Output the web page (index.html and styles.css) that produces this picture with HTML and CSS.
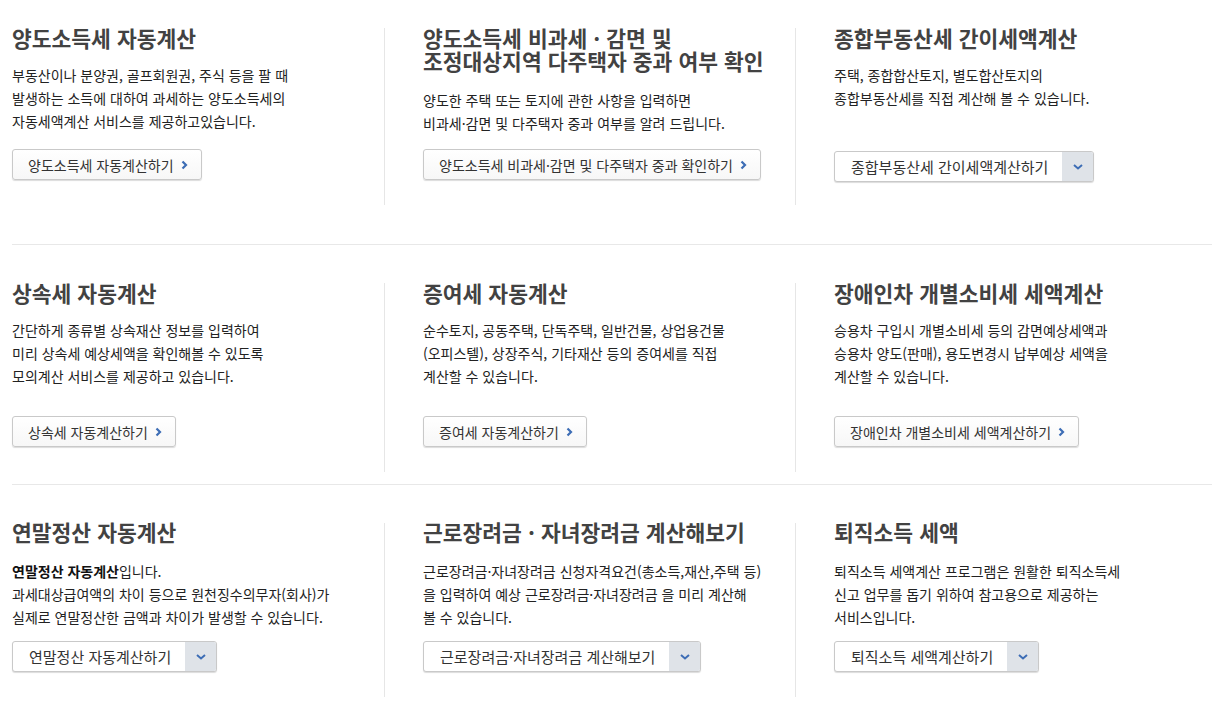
FILE: index.html
```html
<!DOCTYPE html>
<html lang="ko">
<head>
<meta charset="utf-8">
<title>세금 계산</title>
<link rel="stylesheet" href="styles.css">
</head>
<body>
<div class="board">
  <div class="row row1">
    <div class="cell">
      <h3 class="title">양도소득세 자동계산</h3>
      <p class="desc">부동산이나 분양권, 골프회원권, 주식 등을 팔 때<br>발생하는 소득에 대하여 과세하는 양도소득세의<br>자동세액계산 서비스를 제공하고있습니다.</p>
      <a class="btn" href="#"><span>양도소득세 자동계산하기</span><svg class="chev" width="7" height="10" viewBox="0 0 7 10"><polyline points="1.5,1.5 5,5 1.5,8.5" fill="none" stroke="#3d6db5" stroke-width="2.2"/></svg></a>
    </div>
    <div class="cell">
      <h3 class="title">양도소득세 비과세 · 감면 및<br>조정대상지역 다주택자 중과 여부 확인</h3>
      <p class="desc desc2">양도한 주택 또는 토지에 관한 사항을 입력하면<br>비과세·감면 및 다주택자 중과 여부를 알려 드립니다.</p>
      <a class="btn" href="#"><span>양도소득세 비과세·감면 및 다주택자 중과 확인하기</span><svg class="chev" width="7" height="10" viewBox="0 0 7 10"><polyline points="1.5,1.5 5,5 1.5,8.5" fill="none" stroke="#3d6db5" stroke-width="2.2"/></svg></a>
    </div>
    <div class="cell">
      <h3 class="title">종합부동산세 간이세액계산</h3>
      <p class="desc">주택, 종합합산토지, 별도합산토지의<br>종합부동산세를 직접 계산해 볼 수 있습니다.</p>
      <div class="select select-low"><span class="sel-text">종합부동산세 간이세액계산하기</span><span class="sel-arrow"><svg width="10" height="6" viewBox="0 0 10 6"><polyline points="1,1 5,4.5 9,1" fill="none" stroke="#3d6db5" stroke-width="2"/></svg></span></div>
    </div>
  </div>
  <hr class="divider d1">
  <div class="row row2">
    <div class="cell">
      <h3 class="title">상속세 자동계산</h3>
      <p class="desc">간단하게 종류별 상속재산 정보를 입력하여<br>미리 상속세 예상세액을 확인해볼 수 있도록<br>모의계산 서비스를 제공하고 있습니다.</p>
      <a class="btn" href="#"><span>상속세 자동계산하기</span><svg class="chev" width="7" height="10" viewBox="0 0 7 10"><polyline points="1.5,1.5 5,5 1.5,8.5" fill="none" stroke="#3d6db5" stroke-width="2.2"/></svg></a>
    </div>
    <div class="cell">
      <h3 class="title">증여세 자동계산</h3>
      <p class="desc">순수토지, 공동주택, 단독주택, 일반건물, 상업용건물<br>(오피스텔), 상장주식, 기타재산 등의 증여세를 직접<br>계산할 수 있습니다.</p>
      <a class="btn" href="#"><span>증여세 자동계산하기</span><svg class="chev" width="7" height="10" viewBox="0 0 7 10"><polyline points="1.5,1.5 5,5 1.5,8.5" fill="none" stroke="#3d6db5" stroke-width="2.2"/></svg></a>
    </div>
    <div class="cell">
      <h3 class="title">장애인차 개별소비세 세액계산</h3>
      <p class="desc">승용차 구입시 개별소비세 등의 감면예상세액과<br>승용차 양도(판매), 용도변경시 납부예상 세액을<br>계산할 수 있습니다.</p>
      <a class="btn" href="#"><span>장애인차 개별소비세 세액계산하기</span><svg class="chev" width="7" height="10" viewBox="0 0 7 10"><polyline points="1.5,1.5 5,5 1.5,8.5" fill="none" stroke="#3d6db5" stroke-width="2.2"/></svg></a>
    </div>
  </div>
  <hr class="divider d2">
  <div class="row row3">
    <div class="cell">
      <h3 class="title">연말정산 자동계산</h3>
      <p class="desc"><strong>연말정산 자동계산</strong>입니다.<br>과세대상급여액의 차이 등으로 원천징수의무자(회사)가<br>실제로 연말정산한 금액과 차이가 발생할 수 있습니다.</p>
      <div class="select"><span class="sel-text">연말정산 자동계산하기</span><span class="sel-arrow"><svg width="10" height="6" viewBox="0 0 10 6"><polyline points="1,1 5,4.5 9,1" fill="none" stroke="#3d6db5" stroke-width="2"/></svg></span></div>
    </div>
    <div class="cell">
      <h3 class="title">근로장려금 · 자녀장려금 계산해보기</h3>
      <p class="desc">근로장려금·자녀장려금 신청자격요건(총소득,재산,주택 등)<br>을 입력하여 예상 근로장려금·자녀장려금 을 미리 계산해<br>볼 수 있습니다.</p>
      <div class="select"><span class="sel-text">근로장려금·자녀장려금 계산해보기</span><span class="sel-arrow"><svg width="10" height="6" viewBox="0 0 10 6"><polyline points="1,1 5,4.5 9,1" fill="none" stroke="#3d6db5" stroke-width="2"/></svg></span></div>
    </div>
    <div class="cell">
      <h3 class="title">퇴직소득 세액</h3>
      <p class="desc">퇴직소득 세액계산 프로그램은 원활한 퇴직소득세<br>신고 업무를 돕기 위하여 참고용으로 제공하는<br>서비스입니다.</p>
      <div class="select"><span class="sel-text">퇴직소득 세액계산하기</span><span class="sel-arrow"><svg width="10" height="6" viewBox="0 0 10 6"><polyline points="1,1 5,4.5 9,1" fill="none" stroke="#3d6db5" stroke-width="2"/></svg></span></div>
    </div>
  </div>
</div>
</body>
</html>
```
FILE: styles.css
```css
* { box-sizing: border-box; }
html, body { margin: 0; padding: 0; background: #fff; }
body {
  font-family: "Noto Sans CJK KR", "Noto Sans", sans-serif;
  color: #222;
}
.board {
  width: 1200px;
  margin-left: 12px;
  padding-top: 28px;
}
.row {
  display: grid;
  grid-template-columns: 373px 411px 1fr;
}
.row1 { height: 177px; }
.row2 { height: 189px; }
.row3 { height: 174px; }
.cell {
  display: flex;
  flex-direction: column;
  align-items: flex-start;
  border-right: 1px solid #e6e6e6;
  padding-bottom: 25px;
  height: 100%;
}
.cell + .cell { padding-left: 38px; }
.cell:last-child { border-right: 0; }
.title {
  margin: -2px 0 15px;
  font-size: 21.5px;
  line-height: 23px;
  font-weight: 700;
  color: #424242;
  white-space: nowrap;
}
.row3 .title { margin-top: -3px; margin-bottom: 17px; }
.desc {
  margin: 0;
  font-size: 14px;
  line-height: 23px;
  color: #222;
  white-space: nowrap;
}
.desc2 { margin-top: 2px; }
.desc strong { font-weight: 700; color: #111; }
.btn {
  margin-top: auto;
  display: inline-flex;
  align-items: center;
  height: 31px;
  padding: 0 13px 0 15px;
  border: 1px solid #c9c9c9;
  border-radius: 3px;
  background: linear-gradient(#ffffff, #f7f7f7);
  box-shadow: 0 1px 1px rgba(0,0,0,0.14);
  font-size: 14px;
  color: #333;
  text-decoration: none;
  white-space: nowrap;
}
.chev { margin-left: 7px; display: block; }
.select {
  margin-top: auto;
  display: inline-flex;
  align-items: stretch;
  height: 31px;
  border: 1px solid #c9c9c9;
  border-radius: 3px;
  background: #fff;
  box-shadow: 0 1px 1px rgba(0,0,0,0.14);
  white-space: nowrap;
  overflow: hidden;
}
.select-low { margin-bottom: -2px; }
.sel-text {
  display: flex;
  align-items: center;
  padding: 0 14px 0 16px;
  font-size: 15px;
  color: #333;
}
.sel-arrow {
  width: 31px;
  display: flex;
  align-items: center;
  justify-content: center;
  background: #dfe3e8;
}
.sel-arrow svg { display: block; }
.divider {
  border: 0;
  height: 1px;
  background: #e8e8e8;
  margin: 0;
}
.d1 { margin-top: 39px; margin-bottom: 38px; }
.d2 { margin-top: 12px; margin-bottom: 38px; }
```
